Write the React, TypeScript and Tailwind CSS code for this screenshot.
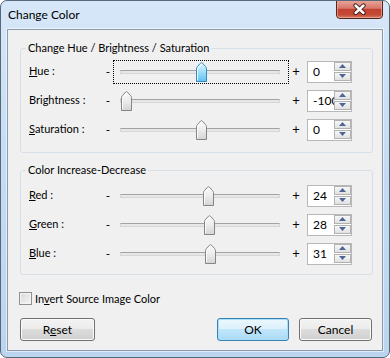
import React from "react";

type Row = {
  label: React.ReactNode;
  value: number;
  min: number;
  max: number;
  focused?: boolean;
};

const hueRows: Row[] = [
  { label: <><span className="underline">H</span>ue :</>, value: 0, min: -180, max: 180, focused: true },
  { label: <>Brightness :</>, value: -100, min: -100, max: 100 },
  { label: <><span className="underline">S</span>aturation :</>, value: 0, min: -100, max: 100 },
];

const colorRows: Row[] = [
  { label: <><span className="underline">R</span>ed :</>, value: 24, min: -255, max: 255 },
  { label: <><span className="underline">G</span>reen :</>, value: 28, min: -255, max: 255 },
  { label: <><span className="underline">B</span>lue :</>, value: 31, min: -255, max: 255 },
];

function Thumb({ active }: { active?: boolean }) {
  return (
    <svg width="11" height="20" viewBox="0 0 11 20">
      <defs>
        <linearGradient id="thumbGray" x1="0" y1="0" x2="0" y2="1">
          <stop offset="0" stopColor="#fafafa" />
          <stop offset="0.5" stopColor="#ececec" />
          <stop offset="1" stopColor="#d4d4d4" />
        </linearGradient>
        <linearGradient id="thumbBlue" x1="0" y1="0" x2="0" y2="1">
          <stop offset="0" stopColor="#e4f6fe" />
          <stop offset="0.45" stopColor="#a6e0fa" />
          <stop offset="1" stopColor="#5cc3ef" />
        </linearGradient>
      </defs>
      <path
        d="M0.5 19.5 V6.8 Q0.5 5.6 1.4 4.6 L4.6 1.1 Q5.5 0.2 6.4 1.1 L9.6 4.6 Q10.5 5.6 10.5 6.8 V19.5 Z"
        fill={active ? "url(#thumbBlue)" : "url(#thumbGray)"}
        stroke={active ? "#3a88c0" : "#858585"}
      />
      <path d="M1.5 18.5 V7 L5.5 2.4" fill="none" stroke="#ffffff" strokeOpacity="0.8" />
    </svg>
  );
}

function Slider({ row }: { row: Row }) {
  const left = 7 + ((row.value - row.min) / (row.max - row.min)) * 149;
  return (
    <div
      className={`relative ml-[1px] h-[24px] w-[176px] border border-dotted ${
        row.focused ? "border-black" : "border-transparent"
      }`}
    >
      <div className="absolute left-[6px] top-[9px] h-[4px] w-[160px] border border-[#d6d6d6] border-t-[#a3a3a3] bg-[#e7e7e7]" />
      <div className="absolute top-[1px]" style={{ left }}>
        <Thumb active={row.focused} />
      </div>
    </div>
  );
}

function SpinBtn({ up }: { up?: boolean }) {
  return (
    <div className="flex h-[9px] w-[17px] items-center justify-center border border-[#b2b2b2] bg-gradient-to-b from-[#f7f7f7] to-[#e1e1e1]">
      <svg width="7" height="4" viewBox="0 0 7 4">
        <path d={up ? "M0 4 L3.5 0 L7 4 Z" : "M0 0 L3.5 4 L7 0 Z"} fill="#4d6697" />
      </svg>
    </div>
  );
}

function Spin({ value }: { value: number }) {
  return (
    <div className="flex h-[22px] w-[45px] border border-[#b8b8b8] bg-white">
      <div className="w-[26px] overflow-hidden whitespace-nowrap pl-[5px] text-[12px] leading-[20px] text-black">
        {value}
      </div>
      <div className="flex w-[17px] flex-col gap-[1px]">
        <SpinBtn up />
        <SpinBtn />
      </div>
    </div>
  );
}

function SliderRow({ row }: { row: Row }) {
  return (
    <div className="flex h-[29px] items-center">
      <div className="w-[75px] whitespace-nowrap">{row.label}</div>
      <div className="w-[8px] text-center text-[12px]">-</div>
      <Slider row={row} />
      <div className="w-[14px] text-center text-[13px]">+</div>
      <div className="ml-[4px]">
        <Spin value={row.value} />
      </div>
    </div>
  );
}

function Group({ title, rows, className }: { title: string; rows: Row[]; className: string }) {
  return (
    <fieldset
      className={`ml-[12px] w-[353px] rounded-[3px] border border-[#d5dfe5] px-[8px] ${className}`}
    >
      <legend className="ml-[-3px] px-[2px] leading-[16px]">{title}</legend>
      {rows.map((r, i) => (
        <SliderRow key={i} row={r} />
      ))}
    </fieldset>
  );
}

function Button({ children, primary }: { children: React.ReactNode; primary?: boolean }) {
  return (
    <button
      className={`h-[23px] rounded-[3px] border text-center text-[12px] leading-[20px] text-black ${
        primary
          ? "border-[#3c7fb1] bg-[linear-gradient(to_bottom,#ecf7fd_0%,#dcf1fc_50%,#c1e6fb_50%,#a9daf4_100%)] shadow-[inset_0_0_0_1px_#a6e0fb]"
          : "border-[#707070] bg-[linear-gradient(to_bottom,#f3f3f3_0%,#ebebeb_50%,#dddddd_50%,#cfcfcf_100%)] shadow-[inset_0_0_0_1px_#fbfbfb]"
      }`}
    >
      {children}
    </button>
  );
}

function CloseButton() {
  return (
    <svg width="47" height="19" viewBox="0 0 47 19">
      <defs>
        <linearGradient id="closeRed" x1="0" y1="0" x2="0" y2="1">
          <stop offset="0" stopColor="#e9a99c" />
          <stop offset="0.45" stopColor="#d6776a" />
          <stop offset="0.5" stopColor="#c3402f" />
          <stop offset="0.8" stopColor="#c44a35" />
          <stop offset="1" stopColor="#dc8a6e" />
        </linearGradient>
      </defs>
      <path
        d="M0.5 0 V15 Q0.5 18.5 4 18.5 H43 Q46.5 18.5 46.5 15 V0"
        fill="url(#closeRed)"
        stroke="#55251d"
      />
      <path d="M1.5 0 V15 Q1.5 17.5 4 17.5 H43 Q45.5 17.5 45.5 15 V0" fill="none" stroke="#f0b8aa" strokeOpacity="0.6" />
      <g strokeLinecap="round">
        <path d="M19.5 5.5 L27.5 13 M27.5 5.5 L19.5 13" stroke="#3a1b15" strokeWidth="4.4" />
        <path d="M19.5 5.5 L27.5 13 M27.5 5.5 L19.5 13" stroke="#ffffff" strokeWidth="2.4" />
      </g>
    </svg>
  );
}

export default function App() {
  return (
    <div className="h-[358px] w-[390px] overflow-hidden rounded-[7px] border border-[#56687c] bg-gradient-to-b from-[#d6e7f8] via-[#c4dbf3] to-[#bcd5ef] font-['Lato','Segoe_UI',sans-serif] text-[11px] text-black">
      <div className="flex h-[28px] items-start justify-between">
        <div className="pl-[7px] pt-[6px] text-[12px] leading-[16px]">Change Color</div>
        <div className="mr-[6px] mt-[-1px]">
          <CloseButton />
        </div>
      </div>
      <div className="mx-[6px] flex h-[322px] flex-col border border-[#8a9bae] bg-[#f0f0f0] shadow-[0_0_0_1px_rgba(255,255,255,0.55)]">
        <Group title="Change Hue / Brightness / Saturation" rows={hueRows} className="mt-[10px] pb-[8px] pt-[1px]" />
        <Group title="Color Increase-Decrease" rows={colorRows} className="mt-[9px] pb-[6px] pt-[3px]" />
        <label className="ml-[11px] mt-[17px] flex h-[13px] items-center gap-[3px]">
          <span className="h-[13px] w-[13px] border border-[#8e8f8f] bg-gradient-to-br from-[#d8d8d8] to-[#f7f7f7] shadow-[inset_0_0_0_1px_#f4f4f4]" />
          <span className="leading-[16px]">
            In<span className="underline">v</span>ert Source Image Color
          </span>
        </label>
        <div className="mt-[13px] flex items-center pl-[12px] pr-[10px]">
          <div className="w-[73px]">
            <Button>
              <span className="block w-[73px]">
                R<span className="underline">e</span>set
              </span>
            </Button>
          </div>
          <div className="flex-1" />
          <div className="flex gap-[10px]">
            <Button primary>
              <span className="block w-[70px]">OK</span>
            </Button>
            <Button>
              <span className="block w-[71px]">Cancel</span>
            </Button>
          </div>
        </div>
      </div>
    </div>
  );
}
